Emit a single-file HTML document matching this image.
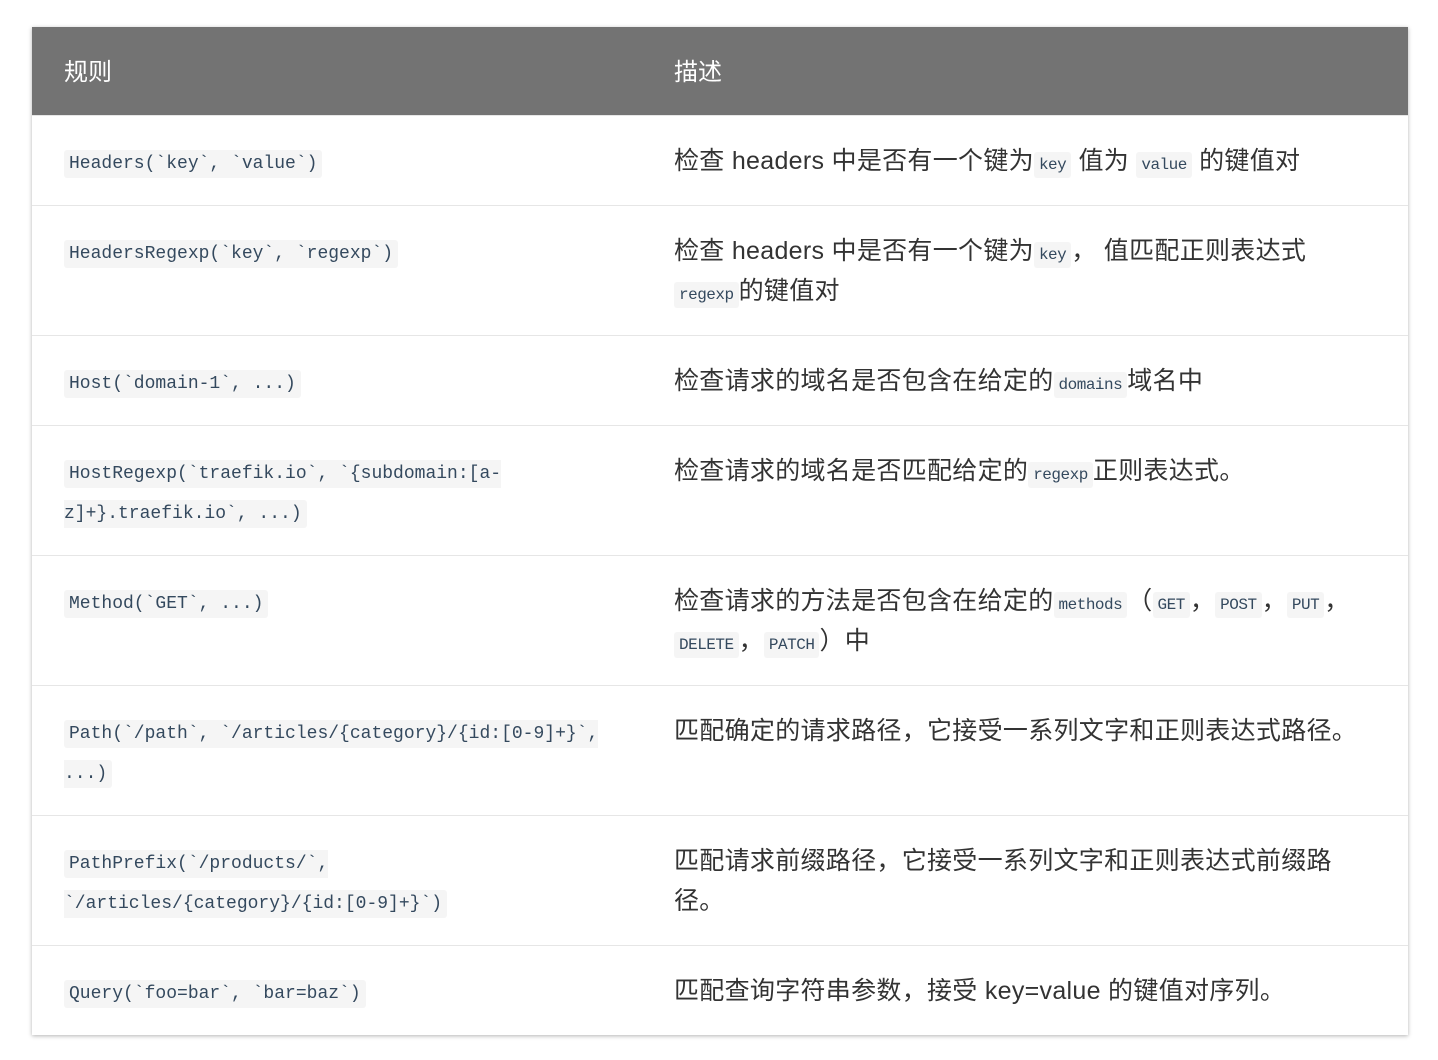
<!DOCTYPE html>
<html><head><meta charset="utf-8"><style>
body{margin:0;background:#fff;font-family:"Liberation Sans","Noto Sans CJK SC",sans-serif;}
table{position:absolute;left:32px;top:27px;width:1376px;border-collapse:collapse;box-shadow:0 1px 4px rgba(0,0,0,.3);table-layout:fixed;}
th{background:#737373;color:#fff;font-weight:normal;font-size:24px;text-align:left;padding:26px 32px 22px;line-height:40px;height:40px;}
td{padding:25px 32px 24px;line-height:40px;font-size:24px;color:#333;vertical-align:top;border-top:1px solid #e6e6e6;}
td.d{font-size:25px;letter-spacing:0.3px;padding-right:18px;}
.c1{width:546px;}
code{font-family:"Liberation Mono",monospace;background:#f5f5f5;color:#34495e;padding:4px 5px;border-radius:3px;line-height:1;letter-spacing:0;}
td:first-child code{font-size:18px;}
td.d code{font-size:16px;letter-spacing:-0.5px;}
</style></head><body>
<table>
<tr><th class="c1">规则</th><th>描述</th></tr>
<tr><td class="c1"><code>Headers(`key`, `value`)</code></td><td class="d">检查 headers 中是否有一个键为<code>key</code> 值为 <code>value</code> 的键值对</td></tr>
<tr><td class="c1"><code>HeadersRegexp(`key`, `regexp`)</code></td><td class="d">检查 headers 中是否有一个键为<code>key</code>， 值匹配正则表达式<br><code>regexp</code>的键值对</td></tr>
<tr><td class="c1"><code>Host(`domain-1`, ...)</code></td><td class="d">检查请求的域名是否包含在给定的<code>domains</code>域名中</td></tr>
<tr><td class="c1"><code>HostRegexp(`traefik.io`, `{subdomain:[a-z]+}.traefik.io`, ...)</code></td><td class="d">检查请求的域名是否匹配给定的<code>regexp</code>正则表达式。</td></tr>
<tr><td class="c1"><code>Method(`GET`, ...)</code></td><td class="d">检查请求的方法是否包含在给定的<code>methods</code>（<code>GET</code>，<code>POST</code>，<code>PUT</code>，<code>DELETE</code>，<code>PATCH</code>）中</td></tr>
<tr><td class="c1"><code>Path(`/path`, `/articles/{category}/{id:[0-9]+}`, ...)</code></td><td class="d">匹配确定的请求路径，它接受一系列文字和正则表达式路径。</td></tr>
<tr><td class="c1"><code>PathPrefix(`/products/`, `/articles/{category}/{id:[0-9]+}`)</code></td><td class="d">匹配请求前缀路径，它接受一系列文字和正则表达式前缀路<br>径。</td></tr>
<tr><td class="c1"><code>Query(`foo=bar`, `bar=baz`)</code></td><td class="d">匹配查询字符串参数，接受 key=value 的键值对序列。</td></tr>
</table>
</body></html>
